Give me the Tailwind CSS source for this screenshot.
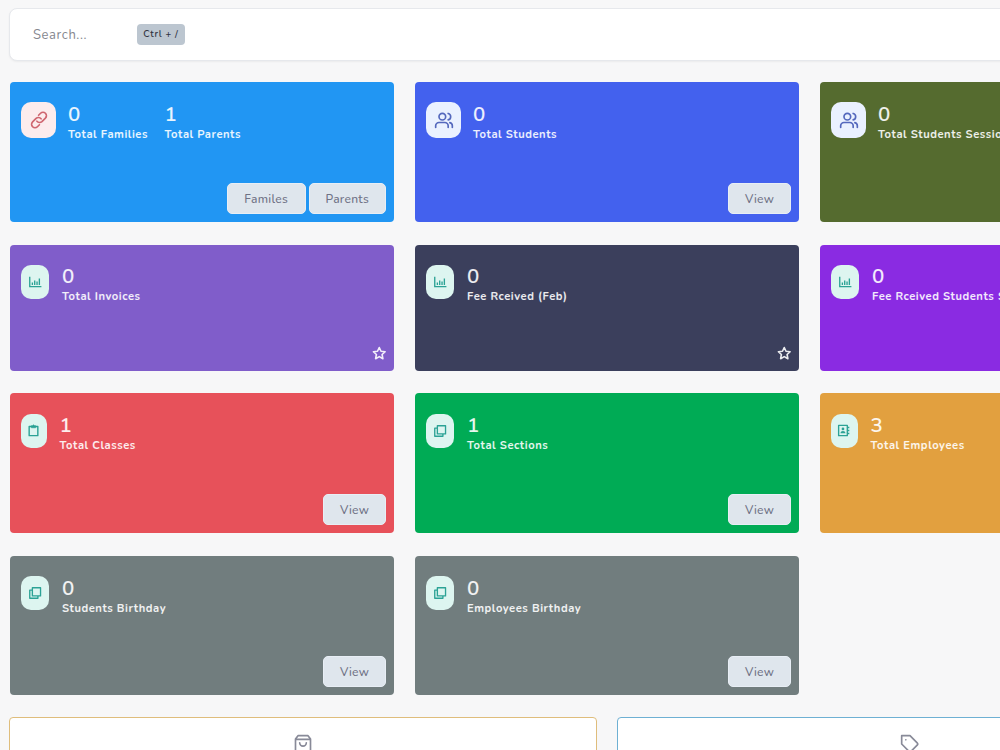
<!DOCTYPE html>
<html lang="en">
<head>
    <meta charset="UTF-8">
    <meta name="viewport" content="width=device-width, initial-scale=1.0">
    <title>Dashboard</title>
    <script src="https://cdn.jsdelivr.net/npm/@tailwindcss/browser@4"></script>
</head>
<body class="h-screen overflow-hidden bg-[#f7f7f8] font-[Nunito,Lato,sans-serif] text-[#6f7285]">

    <!-- Icons -->
    <svg class="hidden">
        <symbol id="link" viewBox="0 0 24 24" fill="none" stroke="currentColor" stroke-width="2" stroke-linecap="round" stroke-linejoin="round">
            <path d="M9.500 13.500a4.200 4.200 0 0 0 6 .4l4.200-4.200a4.100 4.100 0 0 0-5.800-5.800L11.500 6.300" />
            <path d="M14.500 10.500a4.200 4.200 0 0 0-6-.4l-4.200 4.200a4.100 4.100 0 0 0 5.800 5.800l2.400-2.400" />
        </symbol>
        <symbol id="users" viewBox="0 0 24 24" fill="none" stroke="currentColor" stroke-width="2" stroke-linecap="round" stroke-linejoin="round">
            <circle cx="10" cy="8" r="4" />
            <path d="M2 21v-2a4 4 0 0 1 4-4h7a4 4 0 0 1 4 4v2M17 4.130a4 4 0 0 1 0 7.750M22 21v-2a4 4 0 0 0-3-3.850" />
        </symbol>
        <symbol id="chart" viewBox="0 0 24 24" fill="none" stroke="currentColor" stroke-width="2.300">
            <path d="M3 3v17h20M7.500 17v-4M11.500 17V9.500M15.500 17v-6M19.500 17V6" />
        </symbol>
        <symbol id="copy" viewBox="0 0 24 24" fill="none" stroke="currentColor" stroke-width="2.300" stroke-linejoin="round">
            <path d="M7.500 3h14v14h-14zM7 7H3v14h14v-4" />
        </symbol>
        <symbol id="clipboard" viewBox="0 0 24 24" fill="none" stroke="currentColor" stroke-width="2.600" stroke-linejoin="round">
            <path d="M4 4.500h16v17H4z" />
            <path d="M8 3h2l2-1.500L14 3h2v4H8z" fill="currentColor" stroke-width="1" />
        </symbol>
        <symbol id="contact" viewBox="0 0 24 24" fill="none" stroke="currentColor" stroke-width="2.500" stroke-linejoin="round">
            <path d="M3 2.500h16v19H3zM21.500 5v3M21.500 10.500v3M21.500 16v3" />
            <circle cx="11" cy="9" r="2.500" fill="currentColor" stroke="none" />
            <path d="M6.500 17c0-3 2-4.300 4.500-4.300s4.500 1.300 4.500 4.300z" fill="currentColor" stroke="none" />
        </symbol>
        <symbol id="star" viewBox="0 0 24 24" fill="none" stroke="currentColor" stroke-width="2.700" stroke-linejoin="round">
            <path d="M12 2.500l2.900 6.200 6.800.8-5 4.600 1.300 6.900-6-3.400-6 3.400 1.300-6.900-5-4.600 6.800-.8z" />
        </symbol>
        <symbol id="bag" viewBox="0 0 24 24" fill="none" stroke="currentColor" stroke-width="2" stroke-linecap="round" stroke-linejoin="round">
            <path d="M6 2h12l3 4v14a2 2 0 0 1-2 2H5a2 2 0 0 1-2-2V6zM3 6.500h18M16 10.500a4 4 0 0 1-8 0" />
        </symbol>
        <symbol id="tag" viewBox="0 0 24 24" fill="none" stroke="currentColor" stroke-width="2" stroke-linejoin="round">
            <path d="M20.600 13.400l-7.200 7.200a2 2 0 0 1-2.800 0L2 12V2h10l8.600 8.600a2 2 0 0 1 0 2.800z" />
            <path d="M7 7h.01" stroke-linecap="round" />
        </symbol>
    </svg>

    <div class="w-[1195px] ml-[9px] pt-2">

        <!-- Search bar -->
        <nav class="flex items-center h-[53px] pl-[23px] bg-white border border-[#e6e8ec] rounded-lg shadow-xs">
            <span class="w-[104px] pt-0.5 text-[13px] tracking-[0.6px] text-[#85878f]">Search...</span>
            <kbd class="flex items-center justify-center w-12 h-[21px] rounded bg-[#bcc6d0] font-[Nunito,Lato,sans-serif] text-[9.5px] font-semibold tracking-[0.7px] text-[#30343f]">Ctrl + /</kbd>
        </nav>

        <!-- Stat cards -->
        <div class="grid grid-cols-[repeat(3,383.5px)] grid-rows-[140px_126px_140px_139px] gap-x-[21.5px] gap-y-[22.7px] mt-[21px] ml-px text-white/90">

            <div class="flex flex-col justify-between rounded bg-[#2196f3] pt-5 pl-[11px] pr-[7.5px] pb-2">
                <div class="flex">
                    <div class="flex items-center justify-center w-[35px] h-9 rounded-[10px] bg-[#fceced] text-[#cf6670]"><svg class="size-5"><use href="#link" /></svg></div>
                    <div class="w-[96.5px] ml-3">
                        <h3 class="text-[20.5px] leading-6 font-semibold">0</h3>
                        <p class="text-[11.2px] leading-[18px] font-bold tracking-[0.55px] whitespace-nowrap">Total Families</p>
                    </div>
                    <div>
                        <h3 class="text-[20.5px] leading-6 font-semibold">1</h3>
                        <p class="text-[11.2px] leading-[18px] font-bold tracking-[0.55px] whitespace-nowrap">Total Parents</p>
                    </div>
                </div>
                <div class="flex justify-end gap-[3px]">
                    <button class="w-[78.5px] h-[31px] rounded-[5px] border border-[#e8eef5] bg-[#dfe6ed] text-xs font-medium tracking-[0.3px] text-[#6f7285]">Familes</button>
                    <button class="w-[77.5px] h-[31px] rounded-[5px] border border-[#e8eef5] bg-[#dfe6ed] text-xs font-medium tracking-[0.3px] text-[#6f7285]">Parents</button>
                </div>
            </div>

            <div class="flex flex-col justify-between rounded bg-[#4361ee] pt-5 pl-[11px] pr-[7.5px] pb-2">
                <div class="flex gap-3">
                    <div class="flex items-center justify-center w-[35px] h-9 rounded-[10px] bg-[#eaf1ff] text-[#5468bd]"><svg class="size-5"><use href="#users" /></svg></div>
                    <div>
                        <h3 class="text-[20.5px] leading-6 font-semibold">0</h3>
                        <p class="text-[11.2px] leading-[18px] font-bold tracking-[0.55px] whitespace-nowrap">Total Students</p>
                    </div>
                </div>
                <button class="self-end w-[63px] h-[31px] rounded-[5px] border border-[#e8eef5] bg-[#dfe6ed] text-xs font-medium tracking-[0.3px] text-[#6f7285]">View</button>
            </div>

            <div class="rounded bg-[#556b2f] pt-5 pl-[11px]">
                <div class="flex gap-3">
                    <div class="flex items-center justify-center w-[35px] h-9 rounded-[10px] bg-[#eaf1ff] text-[#5468bd]"><svg class="size-5"><use href="#users" /></svg></div>
                    <div>
                        <h3 class="text-[20.5px] leading-6 font-semibold">0</h3>
                        <p class="text-[11.2px] leading-[18px] font-bold tracking-[0.55px] whitespace-nowrap">Total Students Session</p>
                    </div>
                </div>
            </div>

            <div class="flex flex-col justify-between rounded bg-[#805dca] pt-[20.5px] pl-[11px] pr-[7px] pb-[10px]">
                <div class="flex gap-[13px]">
                    <div class="flex items-center justify-center w-7 h-[34px] rounded-[10px] bg-[#ddf5f0] text-[#2ba295]"><svg class="size-[14px] mr-px"><use href="#chart" /></svg></div>
                    <div>
                        <h3 class="text-[20.5px] leading-[23px] font-semibold">0</h3>
                        <p class="text-[11.2px] leading-[18px] font-bold tracking-[0.55px] whitespace-nowrap">Total Invoices</p>
                    </div>
                </div>
                <svg class="self-end size-[14.5px]"><use href="#star" /></svg>
            </div>

            <div class="flex flex-col justify-between rounded bg-[#3b3f5c] pt-[20.5px] pl-[11px] pr-[7px] pb-[10px]">
                <div class="flex gap-[13px]">
                    <div class="flex items-center justify-center w-7 h-[34px] rounded-[10px] bg-[#ddf5f0] text-[#2ba295]"><svg class="size-[14px] mr-px"><use href="#chart" /></svg></div>
                    <div>
                        <h3 class="text-[20.5px] leading-[23px] font-semibold">0</h3>
                        <p class="text-[11.2px] leading-[18px] font-bold tracking-[0.55px] whitespace-nowrap">Fee Rceived (Feb)</p>
                    </div>
                </div>
                <svg class="self-end size-[14.5px]"><use href="#star" /></svg>
            </div>

            <div class="rounded bg-[#8a2be2] pt-[20.5px] pl-[11px]">
                <div class="flex gap-[13px]">
                    <div class="flex items-center justify-center w-7 h-[34px] rounded-[10px] bg-[#ddf5f0] text-[#2ba295]"><svg class="size-[14px] mr-px"><use href="#chart" /></svg></div>
                    <div>
                        <h3 class="text-[20.5px] leading-[23px] font-semibold">0</h3>
                        <p class="text-[11.2px] leading-[18px] font-bold tracking-[0.55px] whitespace-nowrap">Fee Rceived Students Session</p>
                    </div>
                </div>
            </div>

            <div class="flex flex-col justify-between rounded bg-[#e7515a] pt-[20.5px] pl-[11px] pr-[7.5px] pb-2">
                <div class="flex gap-[13px]">
                    <div class="flex items-center justify-center w-[25.5px] h-[34px] rounded-[10px] bg-[#ddf5f0] text-[#2ba295]"><svg class="size-[13px] mr-px"><use href="#clipboard" /></svg></div>
                    <div>
                        <h3 class="text-[20.5px] leading-[23px] font-semibold">1</h3>
                        <p class="text-[11.2px] leading-[18px] font-bold tracking-[0.55px] whitespace-nowrap">Total Classes</p>
                    </div>
                </div>
                <button class="self-end w-[63px] h-[31px] rounded-[5px] border border-[#e8eef5] bg-[#dfe6ed] text-xs font-medium tracking-[0.3px] text-[#6f7285]">View</button>
            </div>

            <div class="flex flex-col justify-between rounded bg-[#00ab55] pt-[20.5px] pl-[11px] pr-[7.5px] pb-2">
                <div class="flex gap-[13px]">
                    <div class="flex items-center justify-center w-7 h-[34px] rounded-[10px] bg-[#ddf5f0] text-[#2ba295]"><svg class="size-[14px] mr-px"><use href="#copy" /></svg></div>
                    <div>
                        <h3 class="text-[20.5px] leading-[23px] font-semibold">1</h3>
                        <p class="text-[11.2px] leading-[18px] font-bold tracking-[0.55px] whitespace-nowrap">Total Sections</p>
                    </div>
                </div>
                <button class="self-end w-[63px] h-[31px] rounded-[5px] border border-[#e8eef5] bg-[#dfe6ed] text-xs font-medium tracking-[0.3px] text-[#6f7285]">View</button>
            </div>

            <div class="rounded bg-[#e2a03f] pt-[20.5px] pl-[11px]">
                <div class="flex gap-[13px]">
                    <div class="flex items-center justify-center w-[26.5px] h-[34px] rounded-[10px] bg-[#ddf5f0] text-[#2ba295]"><svg class="size-[13px] mr-px"><use href="#contact" /></svg></div>
                    <div>
                        <h3 class="text-[20.5px] leading-[23px] font-semibold">3</h3>
                        <p class="text-[11.2px] leading-[18px] font-bold tracking-[0.55px] whitespace-nowrap">Total Employees</p>
                    </div>
                </div>
            </div>

            <div class="flex flex-col justify-between rounded bg-[#717d7e] pt-5 pl-[11px] pr-[7.5px] pb-2">
                <div class="flex gap-[13px]">
                    <div class="flex items-center justify-center w-7 h-[34px] rounded-[10px] bg-[#ddf5f0] text-[#2ba295]"><svg class="size-[14px] mr-px"><use href="#copy" /></svg></div>
                    <div>
                        <h3 class="text-[20.5px] leading-6 font-semibold">0</h3>
                        <p class="text-[11.2px] leading-[18px] font-bold tracking-[0.55px] whitespace-nowrap">Students Birthday</p>
                    </div>
                </div>
                <button class="self-end w-[63px] h-[31px] rounded-[5px] border border-[#e8eef5] bg-[#dfe6ed] text-xs font-medium tracking-[0.3px] text-[#6f7285]">View</button>
            </div>

            <div class="flex flex-col justify-between rounded bg-[#717d7e] pt-5 pl-[11px] pr-[7.5px] pb-2">
                <div class="flex gap-[13px]">
                    <div class="flex items-center justify-center w-7 h-[34px] rounded-[10px] bg-[#ddf5f0] text-[#2ba295]"><svg class="size-[14px] mr-px"><use href="#copy" /></svg></div>
                    <div>
                        <h3 class="text-[20.5px] leading-6 font-semibold">0</h3>
                        <p class="text-[11.2px] leading-[18px] font-bold tracking-[0.55px] whitespace-nowrap">Employees Birthday</p>
                    </div>
                </div>
                <button class="self-end w-[63px] h-[31px] rounded-[5px] border border-[#e8eef5] bg-[#dfe6ed] text-xs font-medium tracking-[0.3px] text-[#6f7285]">View</button>
            </div>
        </div>

        <!-- Bottom panels -->
        <div class="grid grid-cols-2 gap-5 mt-[21.9px] text-[#888a98]">
            <div class="flex justify-center h-40 pt-4 rounded border border-[#dfbd7c] bg-white"><svg class="size-5"><use href="#bag" /></svg></div>
            <div class="flex justify-center h-40 pt-4 rounded border border-[#6eb0d3] bg-white"><svg class="size-5"><use href="#tag" /></svg></div>
        </div>
    </div>
</body>
</html>
